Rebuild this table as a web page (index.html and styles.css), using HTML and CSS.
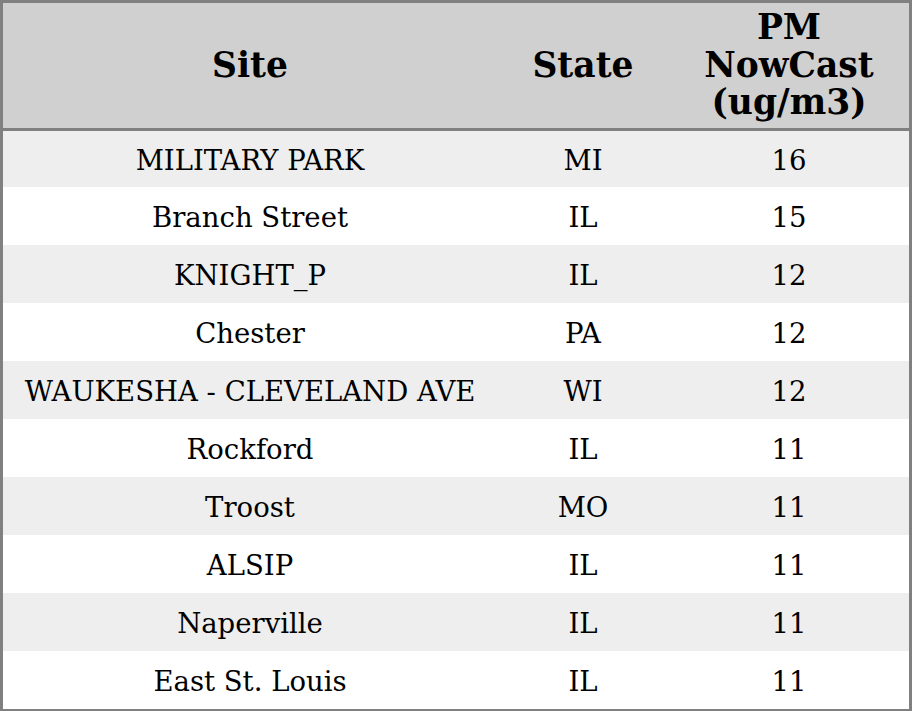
FILE: index.html
```html
<!DOCTYPE html>
<html>
<head>
<meta charset="utf-8">
<link rel="stylesheet" href="styles.css">
</head>
<body>
<table class="grid">
  <colgroup>
    <col class="c-site">
    <col class="c-state">
    <col class="c-pm">
  </colgroup>
  <thead>
    <tr class="head">
      <th>Site</th>
      <th>State</th>
      <th>PM<br>NowCast<br>(ug/m3)</th>
    </tr>
  </thead>
  <tbody>
    <tr class="odd first"><td>MILITARY PARK</td><td>MI</td><td>16</td></tr>
    <tr><td>Branch Street</td><td>IL</td><td>15</td></tr>
    <tr class="odd"><td>KNIGHT_P</td><td>IL</td><td>12</td></tr>
    <tr><td>Chester</td><td>PA</td><td>12</td></tr>
    <tr class="odd"><td>WAUKESHA - CLEVELAND AVE</td><td>WI</td><td>12</td></tr>
    <tr><td>Rockford</td><td>IL</td><td>11</td></tr>
    <tr class="odd"><td>Troost</td><td>MO</td><td>11</td></tr>
    <tr><td>ALSIP</td><td>IL</td><td>11</td></tr>
    <tr class="odd"><td>Naperville</td><td>IL</td><td>11</td></tr>
    <tr><td>East St. Louis</td><td>IL</td><td>11</td></tr>
  </tbody>
</table>
</body>
</html>
```
FILE: styles.css
```css
html, body {
  margin: 0;
  padding: 0;
  background: #ffffff;
}
.grid {
  width: 912px;
  border-collapse: separate;
  border-spacing: 0;
  border: 3px solid #808080;
  font-family: "DejaVu Serif", serif;
  color: #000000;
  table-layout: fixed;
}
.c-site { width: 494px; }
.c-state { width: 172px; }
.c-pm { width: 240px; }
.head th {
  background: #d0d0d0;
  height: 125px;
  padding: 0;
  font-size: 34.5px;
  line-height: 37.5px;
  font-weight: bold;
  text-align: center;
  vertical-align: middle;
  border-bottom: 3px solid #808080;
}
tbody td {
  box-sizing: border-box;
  height: 58px;
  padding: 2px 0 0 0;
  font-size: 27.5px;
  text-align: center;
  vertical-align: middle;
}
tbody tr.first td { height: 56px; }
tbody tr.odd td { background: #eeeeee; }
```
